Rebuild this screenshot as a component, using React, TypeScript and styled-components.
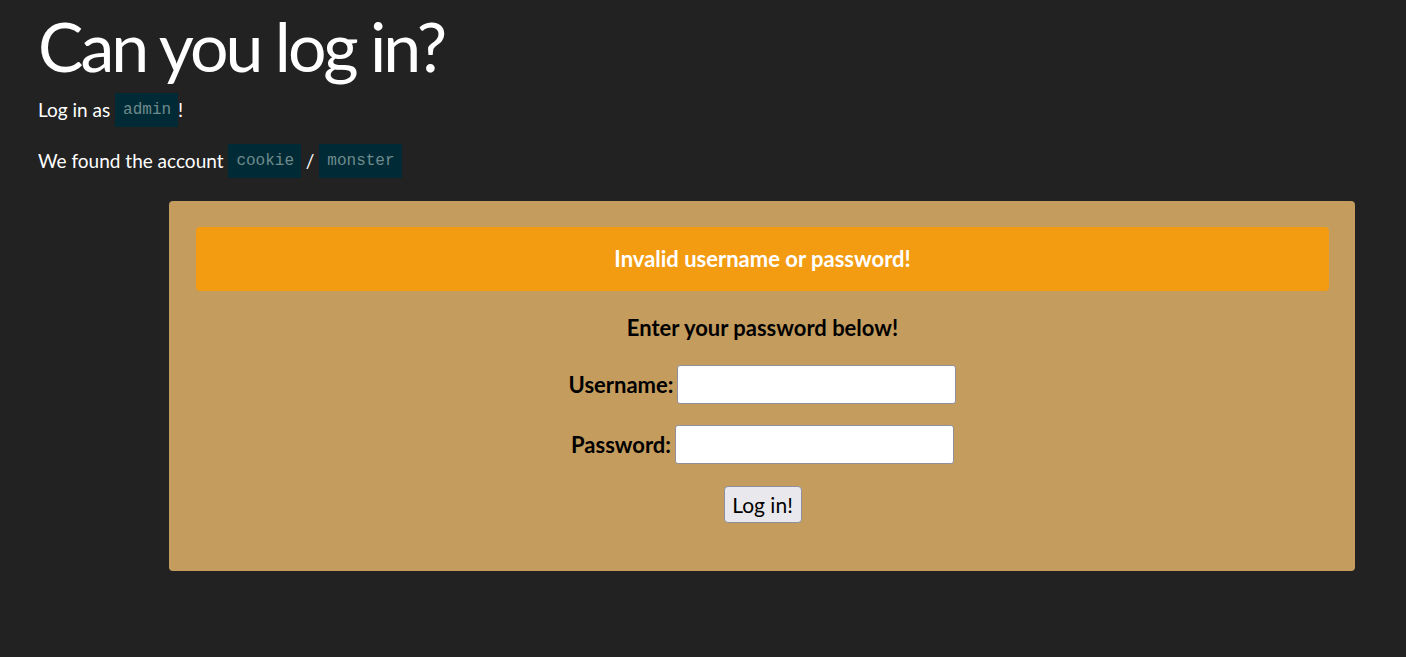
import React from 'react';
import styled, { createGlobalStyle } from 'styled-components';

const GlobalStyle = createGlobalStyle`
  html, body {
    margin: 0;
    padding: 0;
    background-color: #222222;
  }
  body {
    font-family: Lato, "Open Sans", sans-serif;
    color: #ffffff;
  }
`;

const Page = styled.div`
  padding: 0 51px 0 38px;
  min-height: 657px;
  box-sizing: border-box;
`;

const Title = styled.h1`
  margin: 0 0 7px;
  padding-top: 6px;
  font-size: 68px;
  font-weight: 400;
  line-height: 80px;
  letter-spacing: -3px;
`;

const Line = styled.p`
  margin: 0;
  font-size: 19px;
  line-height: 34px;
  &+& {
    margin-top: 17px;
  }
`;

const Code = styled.code`
  display: inline-block;
  font-family: "Liberation Mono", "DejaVu Sans Mono", monospace;
  font-size: 16px;
  line-height: 34px;
  padding: 0 7px 0 8px;
  vertical-align: top;
  background-color: #002b36;
  color: #6f8a8c;
`;

const Card = styled.section`
  margin: 23px 0 0 131px;
  padding: 26px 26px 48px 27px;
  background-color: #c49c5e;
  border-radius: 4px;
  color: #000000;
  text-align: center;
`;

const Alert = styled.div`
  background-color: #f39c12;
  border-radius: 4px;
  height: 64px;
  display: flex;
  align-items: center;
  justify-content: center;
  color: #ffffff;
  font-weight: 700;
  font-size: 22px;
  padding-bottom: 2px;
  box-sizing: border-box;
`;

const Heading = styled.h3`
  margin: 24px 0 0;
  font-size: 22px;
  font-weight: 700;
  line-height: 26px;
`;

const Form = styled.form`
  display: flex;
  flex-direction: column;
  align-items: center;
  margin-top: 24px;
  gap: 21px;
`;

const Field = styled.label`
  display: flex;
  align-items: center;
  gap: 4px;
  font-size: 22px;
  font-weight: 700;
`;

const Input = styled.input`
  width: 279px;
  height: 39px;
  box-sizing: border-box;
  border: 1px solid #8f8f9d;
  border-radius: 3px;
  background: #ffffff;
  font-size: 18px;
  font-family: inherit;
`;

const Button = styled.button`
  height: 37px;
  width: 78px;
  padding: 0;
  font-family: Lato, sans-serif;
  font-size: 21px;
  color: #000000;
  background-color: #e9e9ed;
  border: 1px solid #8f8f9d;
  border-radius: 4px;
  margin-top: 1px;
`;

export default function App() {
  return (
    <>
      <GlobalStyle />
      <Page>
        <Title>Can you log in?</Title>
        <Line>
          Log in as <Code>admin</Code>!
        </Line>
        <Line>
          We found the account <Code>cookie</Code> / <Code>monster</Code>
        </Line>
        <Card>
          <Alert>Invalid username or password!</Alert>
          <Heading>Enter your password below!</Heading>
          <Form onSubmit={(e) => e.preventDefault()}>
            <Field>
              Username: <Input type="text" />
            </Field>
            <Field>
              Password: <Input type="password" />
            </Field>
            <Button type="submit">Log in!</Button>
          </Form>
        </Card>
      </Page>
    </>
  );
}
